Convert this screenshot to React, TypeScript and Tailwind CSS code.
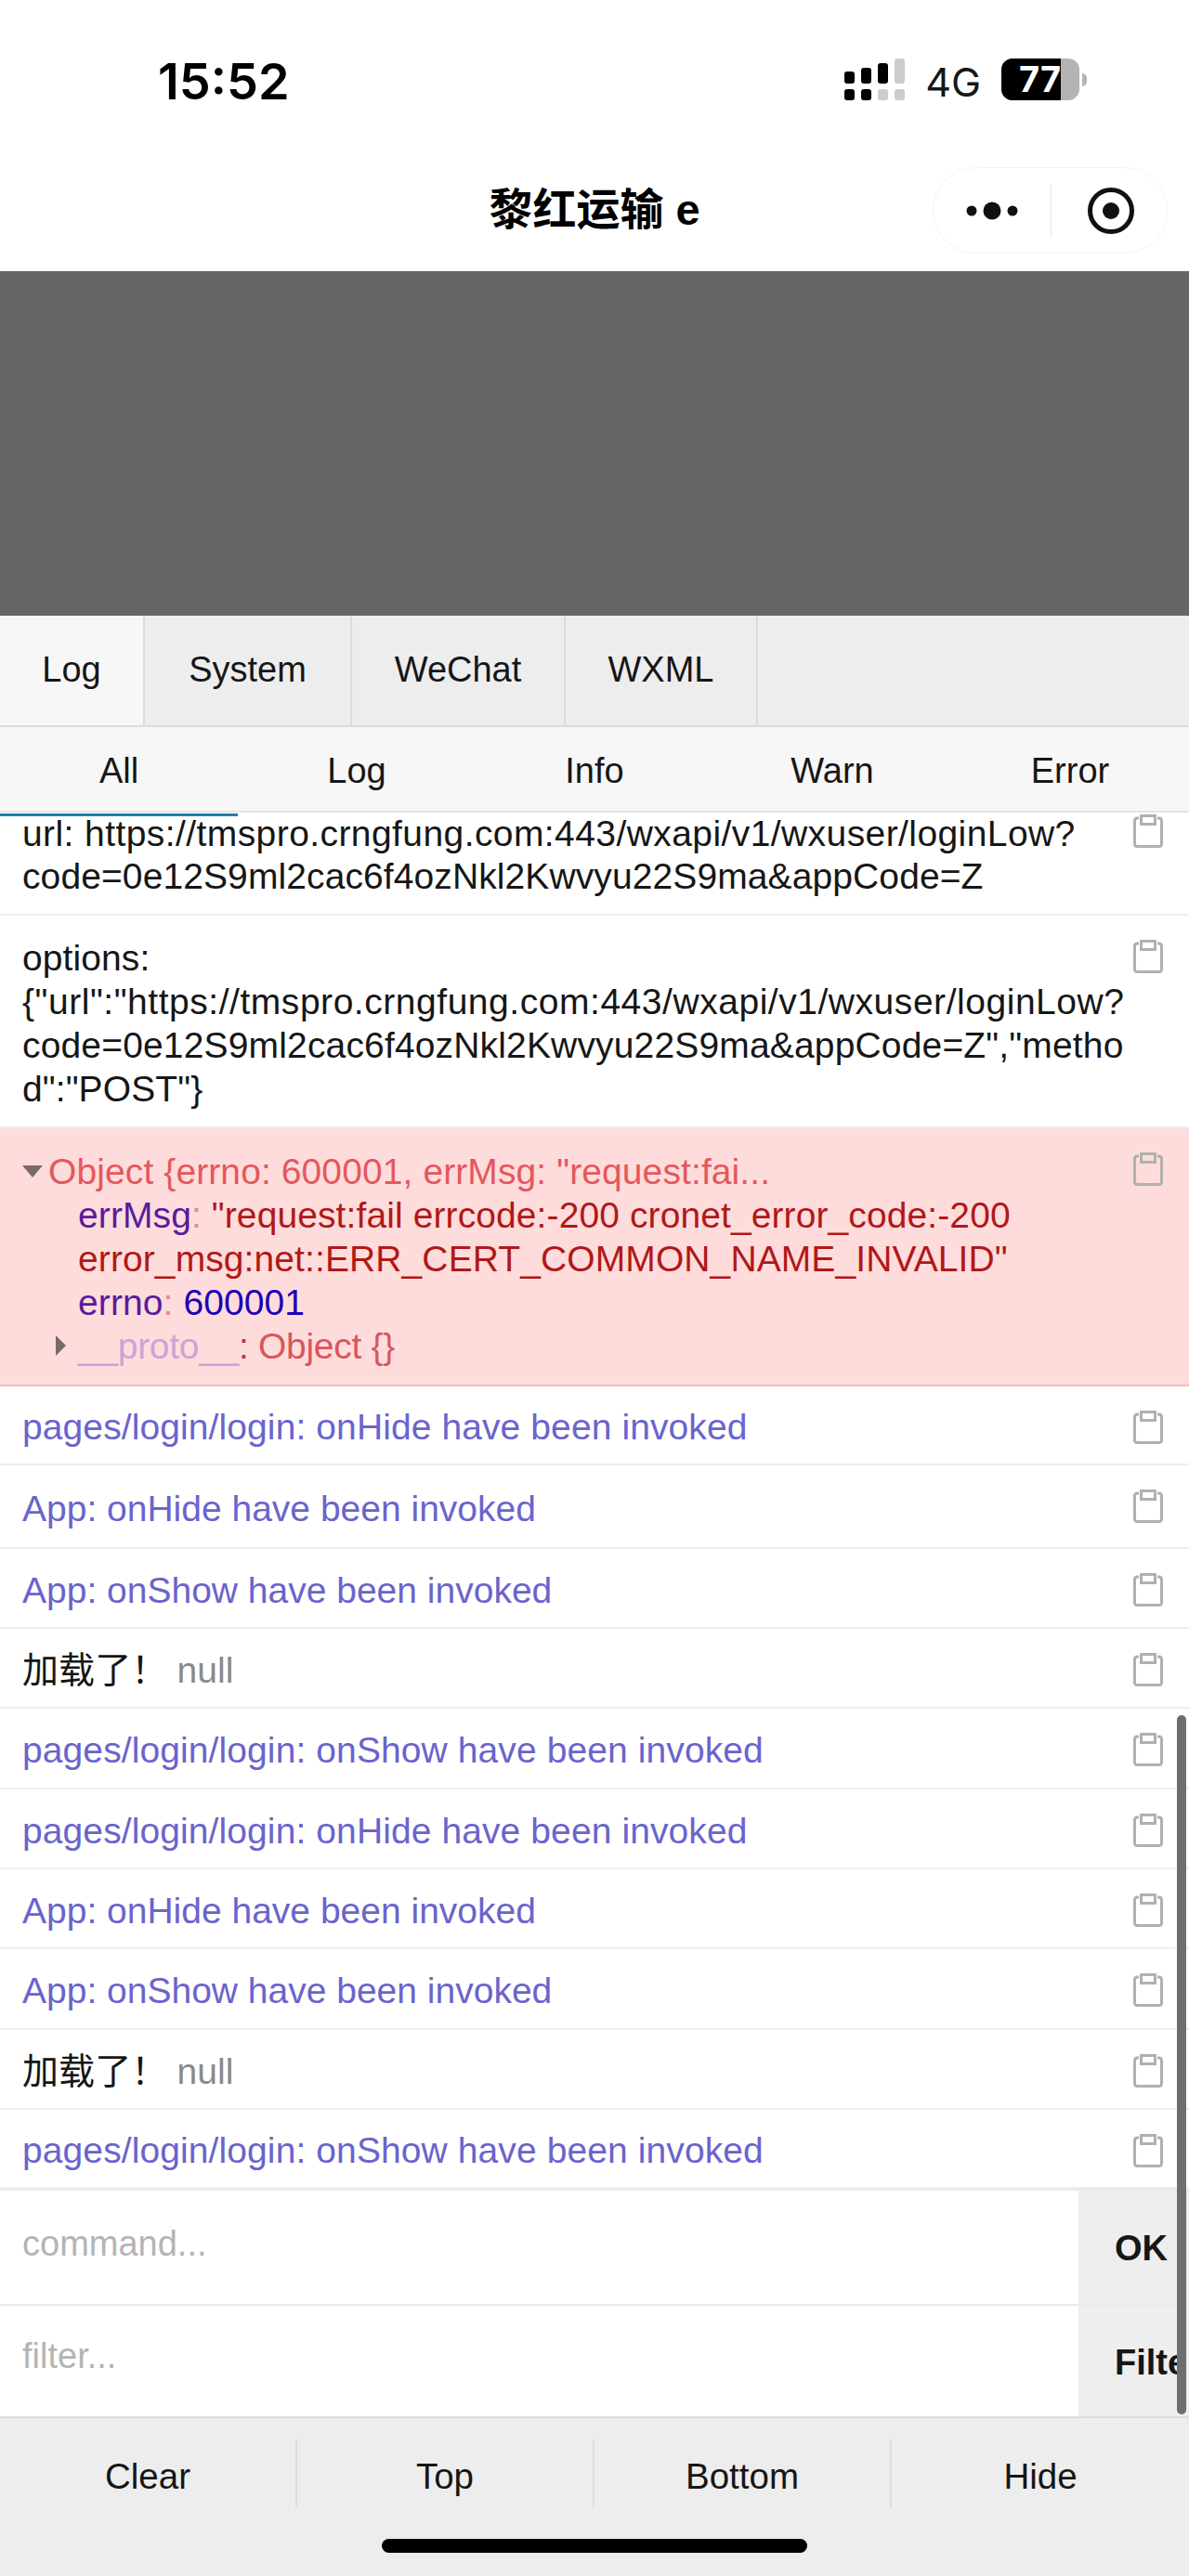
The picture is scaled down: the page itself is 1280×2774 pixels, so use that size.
const font = "font-['Liberation_Sans','Noto_Sans_CJK_SC',sans-serif]"

function CopyIcon({ top = 'top-[26px]' }: { top?: string }) {
  return (
    <svg width="32" height="36" viewBox="0 0 32 36" fill="none" className={`absolute right-[28px] text-[#b0b0b0] ${top}`}>
      <path d="M6 4H4.5Q1.5 4 1.5 7V31.5Q1.5 34.5 4.5 34.5H27.5Q30.5 34.5 30.5 31.5V7Q30.5 4 27.5 4H26" stroke="currentColor" strokeWidth="3" />
      <rect x="8.5" y="1.5" width="15" height="9" stroke="currentColor" strokeWidth="3" />
    </svg>
  )
}

type LogRow = { text: string; kind: 'info' | 'app' | 'plain'; height: string }

const rows: LogRow[] = [
  { text: 'pages/login/login: onHide have been invoked', kind: 'info', height: 'h-[85px]' },
  { text: 'App: onHide have been invoked', kind: 'app', height: 'h-[90px]' },
  { text: 'App: onShow have been invoked', kind: 'app', height: 'h-[86px]' },
  { text: '加载了！', kind: 'plain', height: 'h-[86px]' },
  { text: 'pages/login/login: onShow have been invoked', kind: 'info', height: 'h-[87px]' },
  { text: 'pages/login/login: onHide have been invoked', kind: 'info', height: 'h-[86px]' },
  { text: 'App: onHide have been invoked', kind: 'app', height: 'h-[86px]' },
  { text: 'App: onShow have been invoked', kind: 'app', height: 'h-[87px]' },
  { text: '加载了！', kind: 'plain', height: 'h-[86px]' },
  { text: 'pages/login/login: onShow have been invoked', kind: 'info', height: 'h-[85px]' },
]

export default function App() {
  return (
    <div className={`relative h-[2774px] w-[1280px] overflow-hidden bg-white text-[38px] text-[#161616] ${font}`}>
      {/* status bar */}
      <div className="flex h-[165px] items-start justify-between pl-[170px] pr-[110px] pt-[57px]">
        <span className="font-['Inter',sans-serif] text-[54px] font-semibold leading-[62px] text-black">15:52</span>
        <div className="flex items-start gap-[22px] pt-[6px]">
          <svg width="65" height="46" viewBox="0 0 65 46">
            <rect x="0" y="14" width="11" height="13" rx="3" fill="#000" />
            <rect x="18" y="10" width="11" height="17" rx="3" fill="#000" />
            <rect x="36" y="5" width="11" height="22" rx="3" fill="#000" />
            <rect x="54" y="0" width="11" height="27" rx="3" fill="#ccc" />
            <rect x="0" y="33" width="11" height="12" rx="3" fill="#000" />
            <rect x="18" y="33" width="11" height="12" rx="3" fill="#000" />
            <rect x="36" y="33" width="11" height="12" rx="3" fill="#ccc" />
            <rect x="54" y="33" width="11" height="12" rx="3" fill="#ccc" />
          </svg>
          <span className="mt-[4px] font-['Inter',sans-serif] text-[43px] leading-[43px]">4G</span>
          <div className="flex items-center gap-[3px]">
            <div className="flex h-[45px] w-[84px] overflow-hidden rounded-[12px] bg-[#b4b4b4]">
              <div className="flex w-[64px] items-center justify-end overflow-hidden bg-black font-['Inter',sans-serif] text-[38px] font-bold text-white">77</div>
            </div>
            <div className="h-[14px] w-[5px] rounded-r-full bg-[#b4b4b4]" />
          </div>
        </div>
      </div>

      {/* nav bar */}
      <div className="relative h-[127px]">
        <div className="pt-[35px] text-center text-[47px] font-bold leading-[52px] text-black">黎红运输 e</div>
        <div className="absolute right-[23px] top-[15px] flex h-[93px] w-[253px] items-center rounded-full border border-[#f4f4f4]">
          <div className="flex h-[58px] w-[127px] items-center justify-center border-r border-[#e6e6e6]">
            <svg width="56" height="20" viewBox="0 0 56 20" fill="#111">
              <circle cx="6" cy="10" r="5.5" />
              <circle cx="28" cy="10" r="9.5" />
              <circle cx="50" cy="10" r="5.5" />
            </svg>
          </div>
          <div className="flex flex-1 items-center justify-center pl-[4px]">
            <svg width="52" height="52" viewBox="0 0 52 52" fill="none">
              <circle cx="26" cy="26" r="22.5" stroke="#111" strokeWidth="5" />
              <circle cx="26" cy="26" r="9" fill="#111" />
            </svg>
          </div>
        </div>
      </div>

      {/* grey mask over the page */}
      <div className="h-[371px] bg-[#666]" />

      {/* main tabs */}
      <div className="flex h-[120px] border-b-2 border-[#dcdcdc] bg-[#ededed] leading-[116px]">
        <div className="w-[156px] border-r-2 border-[#dcdcdc] bg-[#f7f7f7] text-center">Log</div>
        <div className="w-[223px] border-r-2 border-[#dcdcdc] text-center">System</div>
        <div className="w-[230px] border-r-2 border-[#dcdcdc] text-center">WeChat</div>
        <div className="w-[207px] border-r-2 border-[#dcdcdc] text-center">WXML</div>
      </div>

      {/* level tabs */}
      <div className="grid h-[92px] grid-cols-5 border-b-2 border-[#e4e4e4] bg-[#f7f7f7] text-center leading-[94px]">
        <div className="relative">
          All
          <div className="absolute -bottom-[2px] left-0 h-[3px] w-full bg-[#1f7fb0]" />
        </div>
        <div>Log</div>
        <div>Info</div>
        <div>Warn</div>
        <div>Error</div>
      </div>

      {/* log list */}
      <div className="text-[39px] tracking-[0.1px]">
        <div className="relative h-[111px] border-b-2 border-[#eee] pl-[24px] leading-[46px]">
          <div className="tracking-[0.42px]">url: https://tmspro.crngfung.com:443/wxapi/v1/wxuser/loginLow?</div>
          <div>code=0e12S9ml2cac6f4ozNkl2Kwvyu22S9ma&amp;appCode=Z</div>
          <CopyIcon top="top-[2px]" />
        </div>
        <div className="relative h-[229px] border-b-2 border-[#eee] pl-[24px] pt-[22px] leading-[47px]">
          <div>options:</div>
          <div className="tracking-[0.54px]">{'{"url":"https://tmspro.crngfung.com:443/wxapi/v1/wxuser/loginLow?'}</div>
          <div className="tracking-[0.16px]">{'code=0e12S9ml2cac6f4ozNkl2Kwvyu22S9ma&appCode=Z","metho'}</div>
          <div>{'d":"POST"}'}</div>
          <CopyIcon />
        </div>
        <div className="relative h-[278px] border-b-2 border-[#f6b8bc] bg-[#ffdcdc] pl-[24px] pt-[23px] leading-[47px]">
          <div className="flex items-center whitespace-pre text-[#e4585c]">
            <span className="mr-[6px] h-0 w-0 border-x-[11px] border-t-[13px] border-x-transparent border-t-[#7a6a6a]" />
            {'Object {errno: 600001, errMsg: "request:fai...'}
          </div>
          <div className="pl-[60px]">
            <div className="text-[#b01818]"><span className="text-[#5a1a9e]">errMsg</span><span className="text-[#e08a9a]">:</span> "request:fail errcode:-200 cronet_error_code:-200</div>
            <div className="text-[#b01818]">error_msg:net::ERR_CERT_COMMON_NAME_INVALID"</div>
            <div><span className="text-[#5a1a9e]">errno</span><span className="text-[#e08a9a]">:</span> <span className="text-[#1c00b8]">600001</span></div>
            <div className="relative tracking-[-0.3px] text-[#d9565c]">
              <span className="absolute -left-[24px] top-[12px] h-0 w-0 border-y-[11px] border-l-[11px] border-y-transparent border-l-[#7a6a6a]" />
              <span className="text-[#c9a5d6]">__proto__</span><span className="text-[#c8324a]">:</span> Object {'{}'}
            </div>
          </div>
          <CopyIcon />
        </div>
        {rows.map((row, i) => (
          <div
            key={i}
            className={`relative flex items-center border-b-2 border-[#eee] pl-[24px] pt-[6px] ${row.height} ${row.kind === 'plain' ? '' : 'text-[#6a64cc]'} ${row.kind === 'app' ? 'tracking-normal' : ''}`}
          >
            {row.text}
            {row.kind === 'plain' && <span className="ml-[10px] text-[#8a8a8a]">null</span>}
            <CopyIcon />
          </div>
        ))}
      </div>

      {/* command and filter */}
      <div className="flex h-[126px] border-y-2 border-[#eaeaea]">
        <div className="flex-1 pl-[24px] pt-[34px] leading-[46px] text-[#b4b4b4]">command...</div>
        <div className="w-[119px] overflow-hidden whitespace-nowrap bg-[#eeeeee] pl-[39px] font-bold leading-[124px]">OK</div>
      </div>
      <div className="flex h-[121px] border-b-2 border-[#dcdcdc]">
        <div className="flex-1 pl-[24px] pt-[31px] leading-[46px] text-[#b4b4b4]">filter...</div>
        <div className="w-[119px] overflow-hidden whitespace-nowrap bg-[#eeeeee] pl-[39px] font-bold leading-[122px]">Filter</div>
      </div>

      {/* footer buttons */}
      <div className="h-[170px] bg-[#ededed] text-[38.5px]">
        <div className="grid grid-cols-4 pt-[23px] text-center leading-[79px]">
          <div className="h-[73px] border-r-2 border-[#dcdcdc]">Clear</div>
          <div className="h-[73px] border-r-2 border-[#dcdcdc]">Top</div>
          <div className="h-[73px] border-r-2 border-[#dcdcdc]">Bottom</div>
          <div className="h-[73px]">Hide</div>
        </div>
        <div className="mx-auto mt-[34px] h-[15px] w-[458px] rounded-full bg-black" />
      </div>

      {/* scrollbar over the list */}
      <div className="absolute right-[3px] top-[1847px] h-[753px] w-[10px] rounded-full bg-[#6e6e6e]" />
    </div>
  )
}
